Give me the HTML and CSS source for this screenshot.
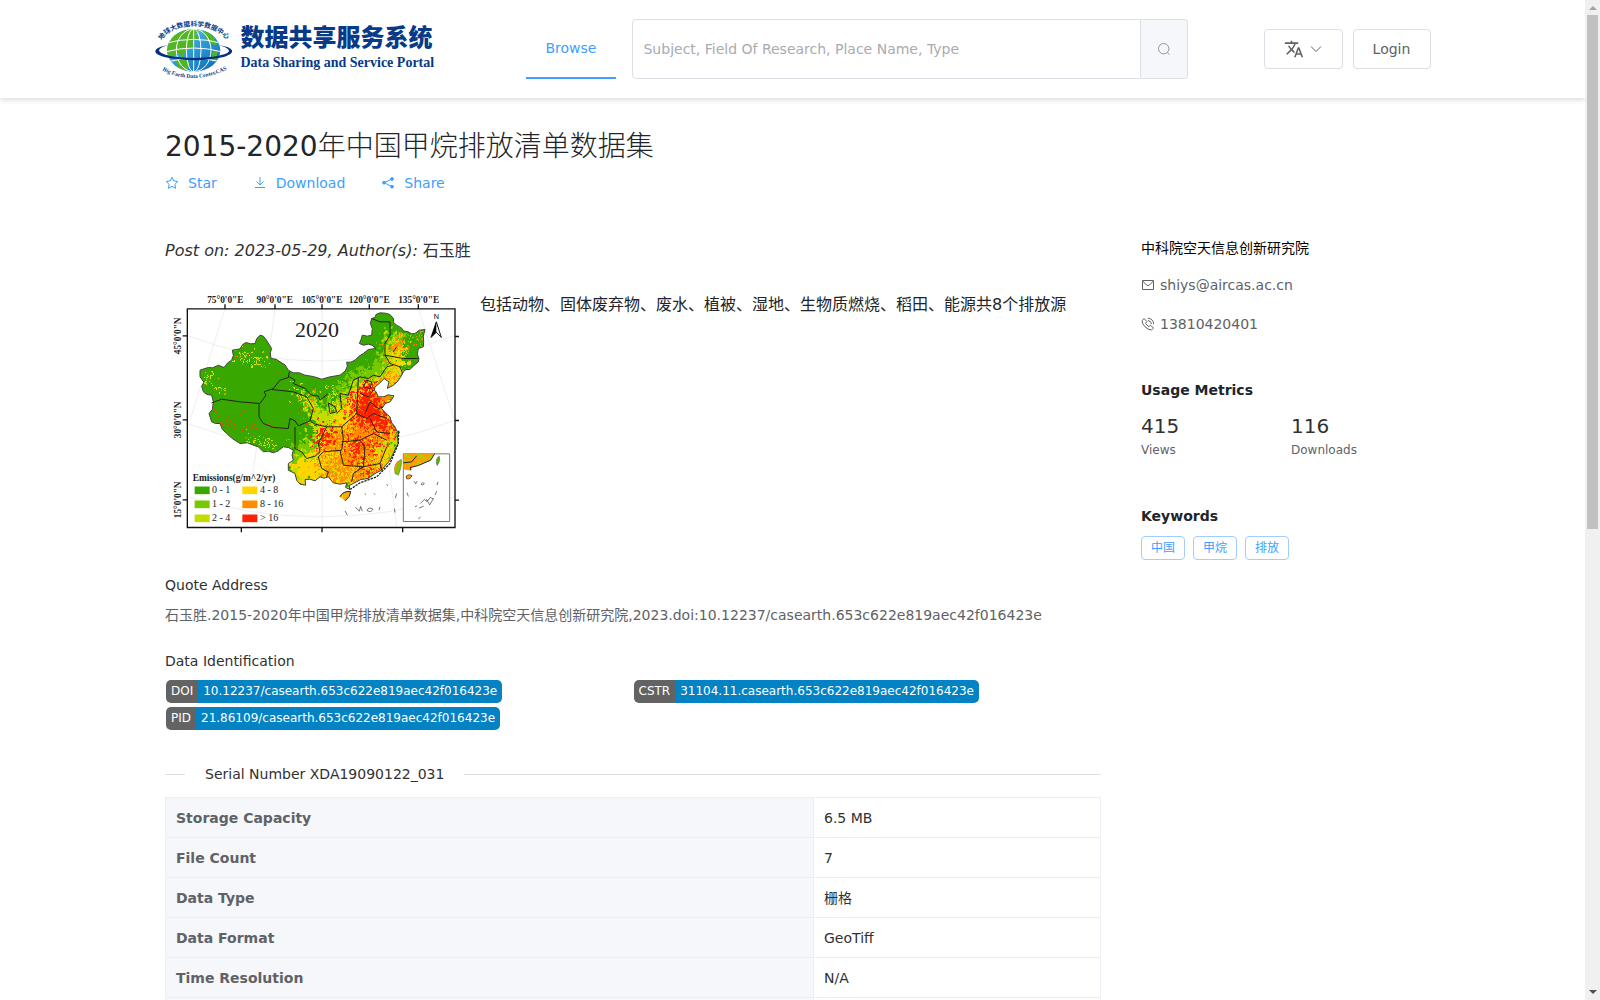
FILE: index.html
```html
<!DOCTYPE html>
<html lang="zh-CN">
<head>
<meta charset="utf-8">
<meta name="viewport" content="width=device-width, initial-scale=1">
<title>2015-2020年中国甲烷排放清单数据集</title>
<link rel="stylesheet" href="styles.css">
</head>
<body>
<div class="viewport">
  <header class="header">
    <div class="header-inner">
      <a class="logo" href="#">
        <svg class="logo-globe" viewBox="0 0 234 186" aria-hidden="true">
          <defs>
            <linearGradient id="sea" x1="0" y1="0" x2="1" y2="1"><stop offset="0" stop-color="#8ed0e8"/><stop offset=".5" stop-color="#2a9ad5"/><stop offset="1" stop-color="#0b65b5"/></linearGradient>
            <clipPath id="ball"><ellipse cx="116" cy="97" rx="80" ry="64"/></clipPath>
            <path id="arc-top" d="M20 67 C52 10 180 10 216 69"/>
            <path id="arc-bottom" d="M22 157 Q116 206 222 151"/>
          </defs>
          <ellipse cx="116" cy="97" rx="80" ry="64" fill="url(#sea)"/>
          <g clip-path="url(#ball)">
            <path d="M30 90 L50 55 L95 30 L135 35 L120 48 L136 60 L112 68 L118 88 L92 98 L84 118 L68 106 L52 118 L34 108Z M60 122 L86 118 L104 136 L96 160 L70 150Z M146 38 L172 48 L186 82 L166 78 L152 60Z M172 102 L188 96 L184 128 L170 132Z" fill="#52b426"/>
            <g fill="none" stroke="#fff" stroke-width="3"><ellipse cx="116" cy="97" rx="22" ry="64"/><ellipse cx="116" cy="97" rx="52" ry="64"/><path d="M116 26V162M35 75Q116 53 197 75M34 101Q116 79 198 101M45 130Q116 111 190 130"/></g>
          </g>
          <path d="M38 82 C-6 88 -12 107 28 117 C86 130 158 129 206 117 C248 105 234 88 194 82 C242 97 220 108 190 113 C148 121 82 121 42 113 C12 106 -4 94 38 82Z" fill="#082f7e"/>
          <text class="arc-cn"><textPath href="#arc-top">地球大数据科学数据中心</textPath></text>
          <text class="arc-en"><textPath href="#arc-bottom">Big Earth Data Center,CAS</textPath></text>
        </svg>
        <span class="logo-words">
          <span class="logo-cn">数据共享服务系统</span>
          <span class="logo-en">Data Sharing and Service Portal</span>
        </span>
      </a>
      <nav><a class="nav-link" href="#">Browse</a></nav>
      <form class="search" role="search">
        <input type="text" aria-label="Search" placeholder="Subject, Field Of Research, Place Name, Type">
        <button type="button" aria-label="Submit search">
          <svg class="icon" viewBox="0 0 14 14"><circle cx="6.7" cy="6.7" r="5.2"/><path d="M10.3 10.5l2 2"/></svg>
        </button>
      </form>
      <div class="account">
        <button class="button" type="button" aria-label="Language">
          <svg class="lang-icon" viewBox="0 0 24 24"><path d="m12.87 15.07-2.54-2.51.03-.03c1.74-1.94 2.98-4.17 3.71-6.53H17V4h-7V2H8v2H1v1.99h11.17C11.5 7.92 10.44 9.75 9 11.35 8.07 10.32 7.3 9.19 6.69 8h-2c.73 1.63 1.73 3.17 2.98 4.56l-5.09 5.02L4 19l5-5 3.11 3.11.76-2.04zM18.5 10h-2L12 22h2l1.12-3h4.75L21 22h2l-4.5-12zm-2.62 7 1.62-4.33L19.12 17h-3.24z"/></svg>
          <svg class="icon" viewBox="0 0 14 14"><path d="M2 4.5l5 5 5-5"/></svg>
        </button>
        <button class="button" type="button">Login</button>
      </div>
    </div>
  </header>

  <div class="page">
    <h1><span class="years">2015-2020</span>年中国甲烷排放清单数据集</h1>
    <div class="actions">
      <a href="#"><svg class="icon" viewBox="0 0 14 14"><path d="M7 1.2l1.8 3.7 4 .6-2.9 2.8.7 4L7 10.4l-3.6 1.9.7-4L1.2 5.5l4-.6z"/></svg>Star</a>
      <a href="#"><svg class="icon" viewBox="0 0 14 14"><path d="M7 1v8M3.500 5.500l3.500 3.500 3.500-3.500M2 11.500h10"/></svg>Download</a>
      <a href="#"><svg class="icon icon-solid" viewBox="0 0 14 14"><path d="M11 3L3 6.700l8 4"/><circle cx="11" cy="3" r="1.400"/><circle cx="3" cy="6.700" r="1.400"/><circle cx="11" cy="10.700" r="1.400"/></svg>Share</a>
    </div>

    <div class="columns">
      <main>
        <p class="byline"><em>Post on: 2023-05-29, Author(s): </em>石玉胜</p>
        <div class="summary">
          <svg class="map" viewBox="15 30 900 740" role="img" aria-label="Methane emissions map 2020">
            <defs>
              <path id="land" d="M120 270L132 266 145 262 158 263 175 255 192 262 203 248 215 240 220 226 217 210 240 206 248 193 258 187 272 191 285 190 290 176 300 165 310 168 318 178 335 205 331 218 333 235 348 237 360 245 375 254 385 270 400 278 418 278 435 285 460 289 485 297 510 290 540 285 556 272 562 258 560 246 572 246 585 240 597 228 610 220 625 208 648 205 636 195 625 192 610 195 598 190 603 178 607 165 622 168 635 165 637 145 631 130 635 115 645 112 648 103 660 98 676 99 690 103 701 116 700 126 710 135 725 144 730 152 745 155 755 161 765 160 778 150 795 148 790 168 791 185 790 200 775 205 772 222 777 235 775 245 760 258 750 268 738 268 730 275 722 290 712 305 700 315 682 325 687 305 672 295 663 305 655 312 645 320 643 330 648 335 655 350 672 350 684 344 702 347 696 357 690 365 676 370 665 385 678 400 690 410 695 428 705 440 710 452 718 455 712 468 715 490 702 515 690 540 676 557 665 570 645 580 625 595 602 598 580 610 568 616 570 628 557 622 560 608 540 612 520 608 505 590 492 594 480 590 465 602 450 597 435 598 437 615 420 612 410 600 405 580 385 570 385 550 400 540 396 525 400 510 385 502 370 500 355 512 340 518 325 513 310 515 295 500 280 495 262 488 240 490 218 476 200 460 187 448 180 430 166 430 155 425 147 400 157 388 160 365 155 345 141 343 130 335 125 318 132 306 120 290Z"/>
              <path id="isle" d="M540 650Q548 632 572 634 572 650 555 662 542 662Z"/>
              <clipPath id="land-clip"><use href="#land"/><use href="#isle"/></clipPath>
              <clipPath id="inset-clip"><path d="M730 521H824L812 540 775 556 752 562 755 572 744 570 730 567Z"/></clipPath>
              <filter id="grain" x="-20%" y="-20%" width="140%" height="140%"><feTurbulence type="fractalNoise" baseFrequency=".07" numOctaves="3" seed="4"/><feDisplacementMap in="SourceGraphic" scale="110" xChannelSelector="R" yChannelSelector="G"/></filter>
              <filter id="speck" x="-20%" y="-20%" width="140%" height="140%"><feTurbulence type="fractalNoise" baseFrequency=".1" numOctaves="3" seed="9"/><feDisplacementMap in="SourceGraphic" scale="130" xChannelSelector="G" yChannelSelector="R"/></filter>
            </defs>
            <g fill="none" stroke="#e6e6e6" stroke-width="2"><path d="M82 166Q480 320 885 166M82 430Q480 580 885 420M82 650Q480 770 885 650M195 85L90 420M345 85L275 610M486 85V740M628 85L710 740M775 85L885 425"/></g>
            <use href="#land" fill="#38a800"/><use href="#isle" fill="#ffaa00"/>
            <g clip-path="url(#land-clip)">
              <g filter="url(#grain)">
                <path fill="#78c800" d="M420 330L510 380 560 290 660 240 680 150 730 165 735 290 700 350 730 620 470 630 370 600 400 500 475 465 440 400Z"/>
                <path fill="#c3dc00" d="M440 360L520 400 580 310 670 290 690 160 735 190 725 290 690 350 725 500 620 630 380 620 390 545 455 515 470 455Z"/>
                <path fill="#ffd500" d="M390 545L470 525 490 460 550 410 590 330 680 310 700 240 730 190 725 290 680 350 710 450 690 540 600 630 480 600 430 610Z"/>
                <path d="M215 225L270 232 320 255M135 280L155 300M170 320L185 335M255 475L300 482 340 510M405 320L450 370 455 400M515 310L520 350" fill="none" stroke="#dce000" stroke-width="9"/>
              </g>
              <g filter="url(#speck)">
                <path fill="#ff8c00" d="M460 470L520 440 560 455 590 330 680 300 690 370 710 440 690 540 610 610 500 600 470 520 510 500ZM690 180L725 170 725 220 700 220ZM760 165L795 160 780 190ZM690 270L720 280 690 310ZM430 360L455 365 450 390Z"/>
                <path fill="#ffd500" d="M545 470L570 465 580 500 550 520ZM640 500L700 470 690 530 650 560ZM510 400L550 370 560 410ZM480 520L520 505 540 530 500 550ZM530 570L580 560 600 575 550 595ZM600 545L640 540 630 565Z"/>
                <path fill="#c3dc00" d="M660 490L700 480 695 520 670 530ZM590 560L620 555 615 575ZM500 560L525 555 520 575ZM615 440L635 445 625 460Z"/>
                <path fill="#ff2200" d="M465 470L495 445 525 455 500 495 470 500ZM590 400L600 335 620 305 650 320 635 350 680 375 660 400 710 430 695 460 640 435 570 430ZM565 480L610 465 600 540 575 535ZM625 490L665 475 640 520ZM560 355L590 350 575 400ZM600 580L650 560 630 600Z"/>
                <path d="M180 410L240 440 290 450M350 305L380 312M230 225L250 230M300 245L310 250M330 430L350 435M440 420L465 425" fill="none" stroke="#e84a10" stroke-width="4"/>
              </g>
            </g>
            <g fill="none" stroke="#222" stroke-width="3" stroke-linejoin="round">
              <use href="#land" stroke="#444"/><use href="#isle"/>
              <path d="M155 368L185 357 240 365 300 370 318 345 312 335 340 325 360 300 385 292 388 275M297 372V410L310 430 340 442 385 445 390 415 405 422 415 437 450 422 460 385 440 350 400 335 355 330 335 328M388 290L405 300 400 310 435 325 455 345 475 348 480 360 505 340M405 440V505L425 515 440 535 465 528 480 515 475 490 500 440M500 440L465 432 452 424M505 368L525 380 530 395 510 400ZM530 400L545 385 540 340 565 345 580 300 600 290 625 295 640 285 660 290 680 260 700 255M595 290L590 400 545 440 500 440M545 440L550 475 545 510 490 515 475 530 485 565 505 575 500 590M545 485L600 480 640 460 680 480M540 510L550 555 610 560 615 500 600 480M610 560L580 580 575 605M610 560L660 550 680 500 690 490M660 550L665 570M615 400L630 365 655 385 670 380M590 400L620 415 640 400 680 415M630 415L650 455 690 460M600 340L625 350 640 330M610 320L630 325 635 305 620 300ZM635 115L660 125 690 125 690 165 675 190 675 225 730 235 775 235M700 215L710 200M675 225L690 250 720 260 728 280"/>
              <path d="M570 628L600 608 650 590 690 550 715 490 716 450" stroke-width="4" stroke-dasharray="7 3"/>
            </g>
            <path d="M705 580Q698 550 724 537 727 556 715 585Z" fill="#7fc800" stroke="#222"/>
            <path d="M707 572Q703 555 716 544" stroke="#ff8c00" stroke-width="5" fill="none"/>
            <g fill="none" stroke="#333" stroke-width="2"><path d="M586 681l12 12 4-14 5 14M621 691q5-12 18-4-6 12-18 4M555 692l7 13M660 680l-3 10M703 685l2 12M710 640l-4 14M680 612l3 5M614 640l4 3M642 640l3 4"/></g>
            <path d="M82 86H885V742H82ZM195 72V86M345 72V86M486 72V86M628 72V86M775 72V86M244 742v14M486 742v14M728 742v14M68 167H82M68 419H82M68 659H82M885 169h12M885 421h12M885 660h12" fill="none" stroke="#111" stroke-width="4"/>
            <path d="M730 521H869V724H730Z" fill="#fff" stroke="#777" stroke-width="3"/>
            <g clip-path="url(#inset-clip)"><path fill="#ff9b00" d="M730 521H830V580H730Z"/><path filter="url(#speck)" d="M730 530L770 550 810 520M740 545L820 540" stroke="#a8d800" stroke-width="14" fill="none"/></g>
            <path d="M752 562L775 556 812 540 824 521M730 548l25-3 15-18M752 560v10" fill="none" stroke="#222" stroke-width="3"/>
            <path d="M738 588q8-8 18-2-4 12-16 10z" fill="#ff9b00" stroke="#222" stroke-width="2"/>
            <path d="M830 552q-4-18 8-24 4 14-6 28z" fill="#52b800" stroke="#222"/>
            <g fill="none" stroke="#333" stroke-width="2"><path d="M762 603l5 8 4-8M783 612q4-8 10-2-4 8-10 2M781 670l12-12 8 6 10-12 9 4M777 684l14-6M799 656l10 18 12-20M765 680l6-3M775 716l7-5M825 645l5-12M831 615l3-10M741 637l4 12"/></g>
            <g fill="#38a800"><path d="M104 619h45v23h-45z"/><path fill="#78c800" d="M104 661h45v23h-45z"/><path fill="#c3dc00" d="M104 703h45v23h-45z"/><path fill="#ffd500" d="M247 619h45v23h-45z"/><path fill="#ff8c00" d="M247 661h45v23h-45z"/><path fill="#ff2200" d="M247 703h45v23h-45z"/></g>
            <g class="map-text map-axis"><text x="196" y="70">75°0'0"E</text><text x="344" y="70">90°0'0"E</text><text x="486" y="70">105°0'0"E</text><text x="628" y="70">120°0'0"E</text><text x="776" y="70">135°0'0"E</text>
            <text transform="translate(64 167) rotate(-90)">45°0'0"N</text><text transform="translate(64 419) rotate(-90)">30°0'0"N</text><text transform="translate(64 659) rotate(-90)">15°0'0"N</text></g>
            <text class="map-text map-year" x="471" y="171">2020</text>
            <text class="map-n" x="829" y="116">N</text><path d="M829 125L813 172 829 156 844 172Z" fill="#fff" stroke="#111" stroke-width="3"/><path d="M829 125V156L813 172Z"/>
            <g class="map-text map-legend"><text x="98" y="602" class="map-heading">Emissions(g/m^2/yr)</text><text x="156" y="640">0 - 1</text><text x="156" y="682">1 - 2</text><text x="156" y="724">2 - 4</text><text x="300" y="640">4 - 8</text><text x="300" y="682">8 - 16</text><text x="300" y="724">&gt; 16</text></g>
          </svg>
          <p class="description">包括动物、固体废弃物、废水、植被、湿地、生物质燃烧、稻田、能源共8个排放源</p>
        </div>

        <section class="block">
          <h2>Quote Address</h2>
          <p class="citation">石玉胜.2015-2020年中国甲烷排放清单数据集,中科院空天信息创新研究院,2023.doi:10.12237/casearth.653c622e819aec42f016423e</p>
        </section>
        <section class="block">
          <h2>Data Identification</h2>
          <div class="badges">
            <a class="badge" href="#"><span>DOI</span><span>10.12237/casearth.653c622e819aec42f016423e</span></a>
            <a class="badge" href="#"><span>CSTR</span><span>31104.11.casearth.653c622e819aec42f016423e</span></a>
            <a class="badge" href="#"><span>PID</span><span>21.86109/casearth.653c622e819aec42f016423e</span></a>
          </div>
        </section>

        <div class="divider">Serial Number XDA19090122_031</div>
        <table>
          <tbody>
            <tr><th scope="row">Storage Capacity</th><td>6.5 MB</td></tr>
            <tr><th scope="row">File Count</th><td>7</td></tr>
            <tr><th scope="row">Data Type</th><td>栅格</td></tr>
            <tr><th scope="row">Data Format</th><td>GeoTiff</td></tr>
            <tr><th scope="row">Time Resolution</th><td>N/A</td></tr>
            <tr><th scope="row"></th><td></td></tr>
          </tbody>
        </table>
      </main>

      <aside>
        <p class="org">中科院空天信息创新研究院</p>
        <p class="contact"><svg class="icon" viewBox="0 0 14 14"><path d="M1.500 2.500h11v9h-11zM1.500 3l4 4q1.500 1.200 3 0l4-4"/></svg>shiys@aircas.ac.cn</p>
        <p class="contact"><svg class="icon" viewBox="0 0 14 14"><path d="M1.200 3.500L3 1.600l3 3-1.500 1.900 3.200 3.200 1.800-1.500 3 3-1.800 1.700Q8 13.500 4 9.800 .5 6 1.200 3.500zM7 1.200q5 .5 5.800 5.800M7 3.500q3 .5 3.500 3.500"/></svg>13810420401</p>
        <section class="side-block">
          <h2>Usage Metrics</h2>
          <dl class="metrics">
            <div><dd>415</dd><dt>Views</dt></div>
            <div><dd>116</dd><dt>Downloads</dt></div>
          </dl>
        </section>
        <section class="side-block">
          <h2>Keywords</h2>
          <div class="tags"><span>中国</span><span>甲烷</span><span>排放</span></div>
        </section>
      </aside>
    </div>
  </div>
</div>
<div class="scrollbar" aria-hidden="true"><i class="arrow-up"></i><i class="thumb"></i><i class="arrow-down"></i></div>
</body>
</html>
```
FILE: styles.css
```css
* { box-sizing: border-box; }
body {
  margin: 0;
  padding-right: 15px;
  background: #fff;
  color: #303133;
  font: 14px/20px "DejaVu Sans", "Noto Sans CJK SC", sans-serif;
}
h1, h2, p, dl, dd { margin: 0; }
a { color: inherit; text-decoration: none; }
button, input { font: inherit; color: inherit; }
.viewport { height: 100vh; overflow: hidden; }

.icon { width: 14px; height: 14px; flex: none; fill: none; stroke: currentColor; stroke-width: 1; }
.icon-solid circle { fill: currentColor; }

.header { box-shadow: 0 2px 5px rgba(0, 0, 0, .14); }
.header-inner {
  display: flex;
  align-items: center;
  max-width: 1276px;
  height: 98px;
  margin: 0 auto;
}
.logo { display: flex; flex: 0 0 371px; align-items: center; gap: 8px; color: #073a87; }
.logo-globe { width: 78px; height: 62px; overflow: visible; }
.arc-cn { fill: #073a87; font: 700 20px "Noto Sans CJK SC", sans-serif; }
.arc-en { fill: #073a87; font: 700 17px "Liberation Serif", serif; }
.logo-words { display: flex; flex-direction: column; white-space: nowrap; }
.logo-cn { font: 900 24px/28px "Noto Sans CJK SC", sans-serif; }
.logo-en { font: 700 14px/26px "Liberation Serif", serif; }
.nav-link {
  display: block;
  margin-right: 16px;
  padding: 0 20px;
  border-bottom: 2px solid #409eff;
  color: #409eff;
  line-height: 58px;
}
.search { display: flex; flex: 0 1 556px; height: 60px; }
.search input {
  flex: 1;
  min-width: 0;
  padding: 0 10px;
  border: 1px solid #dcdfe6;
  border-radius: 4px 0 0 4px;
  outline: 0;
}
.search input::placeholder { color: #a8abb2; opacity: 1; }
.search button {
  width: 47px;
  padding: 0;
  border: 1px solid #dcdfe6;
  border-left: 0;
  border-radius: 0 4px 4px 0;
  background: #f5f7fa;
  color: #909399;
}
.search .icon { display: block; margin: 0 auto; }
.account { display: flex; gap: 10px; margin-left: auto; }
.button {
  display: flex;
  align-items: center;
  justify-content: center;
  gap: 5px;
  min-width: 78px;
  height: 40px;
  padding: 0 19px;
  border: 1px solid #dcdfe6;
  border-radius: 4px;
  background: #fff;
  color: #606266;
}
.lang-icon { width: 20px; height: 20px; fill: currentColor; }

.page { max-width: 1255px; margin: 0 auto; padding-top: 30px; }
h1 { color: #212529; font-size: 28px; font-weight: 300; line-height: 38px; }
.years { font-weight: 400; }
.actions { display: flex; gap: 36px; padding-top: 7px; color: #409eff; }
.actions a { display: flex; align-items: center; gap: 9px; }
.columns { display: grid; grid-template-columns: minmax(0, 1fr) 279px; gap: 40px; padding-top: 45px; }

.byline { padding-top: 1px; font-size: 16px; line-height: 24px; }
.summary { display: flex; gap: 15px; padding-top: 27px; color: #212529; }
.map { flex: 0 0 300px; width: 300px; height: 247px; }
.map-text { font-family: "Liberation Serif", serif; fill: #222; }
.map-axis { font-size: 28px; font-weight: 700; text-anchor: middle; }
.map-year { font-size: 66px; text-anchor: middle; }
.map-n { font: 22px "Liberation Sans", sans-serif; text-anchor: middle; }
.map-legend { font-size: 30px; }
.map-heading { font-size: 28px; font-weight: 700; }
.description { font-size: 16px; line-height: 30px; }

.block { padding-top: 26px; }
.summary + .block { padding-top: 38px; }
h2 { font-size: 14px; font-weight: 400; line-height: 20px; }
.citation { padding-top: 10px; color: #606266; }
.badges { display: grid; grid-template-columns: 1fr 1fr; gap: 4px 0; padding: 9px 0 0 1px; }
.badge { display: flex; justify-self: start; overflow: hidden; border-radius: 5px; color: #fff; font-size: 12px; line-height: 23px; white-space: nowrap; }
.badge span { padding: 0 5px; background: #0383c3; }
.badge span:first-child { background: #636363; }

.divider { display: flex; align-items: center; gap: 20px; padding: 34px 0 13px; white-space: nowrap; }
.divider::before, .divider::after { content: ""; width: 20px; height: 1px; background: #dcdfe6; }
.divider::after { flex: 1; }
table { width: 100%; border-collapse: collapse; table-layout: fixed; }
th, td { height: 40px; padding: 0 10px; border: 1px solid #ebeef5; text-align: left; }
th { width: 648px; background: #f5f7fa; color: #606266; font-weight: 700; }

.org { color: #000; }
.contact { display: flex; align-items: center; gap: 5px; padding-top: 17px; color: #606266; }
.contact + .contact { padding-top: 19px; }
.side-block { padding-top: 46px; }
.side-block h2 { color: #212529; font-weight: 700; }
.metrics { display: grid; grid-template-columns: 150px 1fr; padding-top: 12px; }
.metrics div { display: flex; flex-direction: column; }
.metrics dd { font-size: 20px; line-height: 28px; }
.metrics dt { color: #606266; font-size: 12px; line-height: 20px; }
.tags { display: flex; gap: 8px; padding-top: 10px; }
.tags span { padding: 0 9px; border: 1px solid #a0cfff; border-radius: 4px; color: #409eff; font-size: 12px; line-height: 22px; }

.scrollbar {
  position: fixed;
  inset: 0 0 0 auto;
  display: flex;
  flex-direction: column;
  align-items: center;
  width: 15px;
  padding: 6px 0;
  background: #f0f0f0;
}
.arrow-up, .arrow-down { border: 4px solid transparent; }
.arrow-up { border-top: 0; border-bottom-color: #a3a3a3; }
.arrow-down { margin-top: auto; border-bottom: 0; border-top-color: #505050; }
.thumb { width: 11px; height: 52%; margin-top: 5px; background: #c1c1c1; }
```
